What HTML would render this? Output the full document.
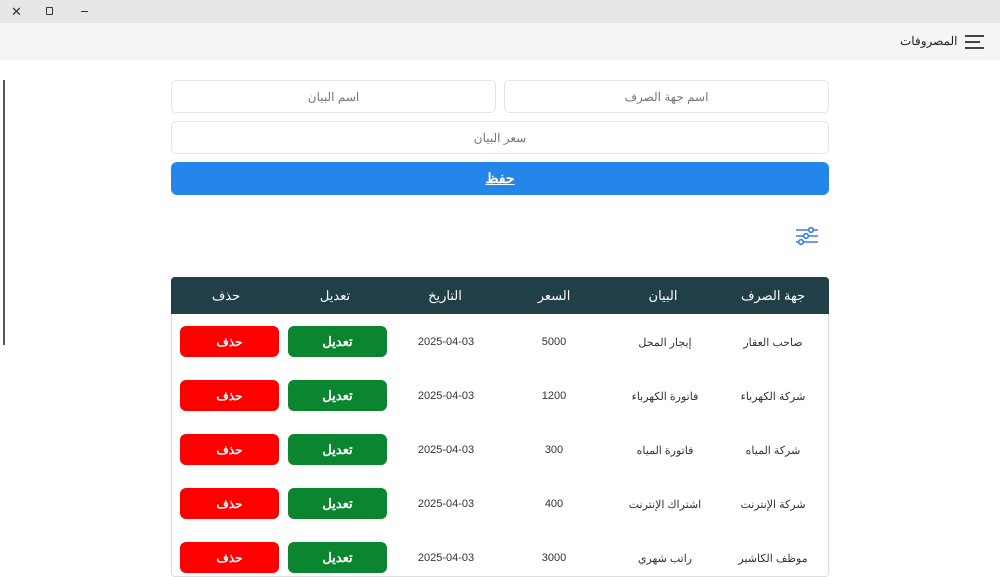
<!DOCTYPE html>
<html><head><meta charset="utf-8"><style>
*{margin:0;padding:0;box-sizing:border-box}
body{width:1000px;height:562px;overflow:hidden;background:#fff;font-family:"Liberation Sans","Noto Sans CJK SC",sans-serif;position:relative;color:#222}
.a{position:absolute}
.top{left:0;top:0;width:1000px;height:23px;background:#e6e6e6}
.bar{left:0;top:23px;width:1000px;height:37px;background:#f5f5f5}
.inp{background:#fff;border:1px solid #e4e4e4;border-radius:5px;display:flex;align-items:center;justify-content:center;font-size:12px;color:#777;direction:rtl}
.btn{border-radius:6px;display:flex;align-items:center;justify-content:center;color:#fff;font-weight:bold;font-size:12px;direction:rtl}
.cell{font-size:11px;color:#333;text-align:center;direction:rtl;width:100px}
.hc{font-size:13px;color:#fff;text-align:center;direction:rtl;width:100px;top:288px}
</style></head><body>
<div class="a top"></div>
<div class="a" style="left:11px;top:4px;font-size:13px;color:#333">✕</div>
<div class="a" style="left:46px;top:7px;width:7px;height:8px;border:1.3px solid #333;border-radius:1px"></div>
<div class="a" style="left:81px;top:11px;width:7px;height:1px;background:#333"></div>
<div class="a bar"></div>
<div class="a" style="left:900px;top:34px;font-size:12px;color:#222;direction:rtl">المصروفات</div>
<div class="a" style="left:965px;top:35px;width:19px;height:2px;background:#444"></div>
<div class="a" style="left:965px;top:41px;width:15px;height:2px;background:#444"></div>
<div class="a" style="left:965px;top:47px;width:19px;height:2px;background:#444"></div>
<div class="a" style="left:3px;top:80px;width:2px;height:265px;background:#555"></div>

<div class="a inp" style="left:504px;top:80px;width:325px;height:33px">اسم جهة الصرف</div>
<div class="a inp" style="left:171px;top:80px;width:325px;height:33px">اسم البيان</div>
<div class="a inp" style="left:171px;top:121px;width:658px;height:33px">سعر البيان</div>
<div class="a btn" style="left:171px;top:162px;width:658px;height:33px;background:#2485ea;font-size:14px;text-decoration:underline">حفظ</div>

<svg class="a" style="left:795px;top:226px" width="24" height="22" viewBox="0 0 24 22">
<g stroke="#3b7be6" stroke-width="1.6" fill="#fff">
<line x1="1" y1="4" x2="23" y2="4"/><line x1="1" y1="10" x2="23" y2="10"/><line x1="1" y1="16" x2="23" y2="16"/>
<circle cx="16" cy="4" r="2.3"/><circle cx="11" cy="10" r="2.3"/><circle cx="6" cy="16" r="2.3"/></g></svg>

<div class="a" style="left:171px;top:277px;width:658px;height:300px;border:1px solid #ddd;border-radius:4px"></div>
<div class="a" style="left:171px;top:277px;width:658px;height:37px;background:#213f47;border-radius:4px 4px 0 0"></div>
<div class="a hc" style="left:723px">جهة الصرف</div>
<div class="a hc" style="left:613px">البيان</div>
<div class="a hc" style="left:504px">السعر</div>
<div class="a hc" style="left:395px">التاريخ</div>
<div class="a hc" style="left:285px">تعديل</div>
<div class="a hc" style="left:176px">حذف</div>

<div id="rows"></div>
<script>
var d=[["صاحب العقار","إيجار المحل","5000"],["شركة الكهرباء","فاتورة الكهرباء","1200"],["شركة المياه","فاتورة المياه","300"],["شركة الإنترنت","اشتراك الإنترنت","400"],["موظف الكاشير","راتب شهري","3000"]];
var h="";d.forEach(function(r,i){var c=342+54*i;
h+='<div class="a cell" style="left:723px;top:'+(c-6)+'px">'+r[0]+'</div>';
h+='<div class="a cell" style="left:615px;top:'+(c-6)+'px">'+r[1]+'</div>';
h+='<div class="a cell" style="left:504px;top:'+(c-6)+'px">'+r[2]+'</div>';
h+='<div class="a cell" style="left:396px;top:'+(c-6)+'px">2025-04-03</div>';
h+='<div class="a btn" style="left:288px;top:'+(c-16)+'px;width:99px;height:31px;background:#0b8530;font-size:13px">تعديل</div>';
h+='<div class="a btn" style="left:180px;top:'+(c-16)+'px;width:99px;height:31px;background:#fe0000">حذف</div>';});
document.getElementById("rows").innerHTML=h;
</script>
</body></html>
